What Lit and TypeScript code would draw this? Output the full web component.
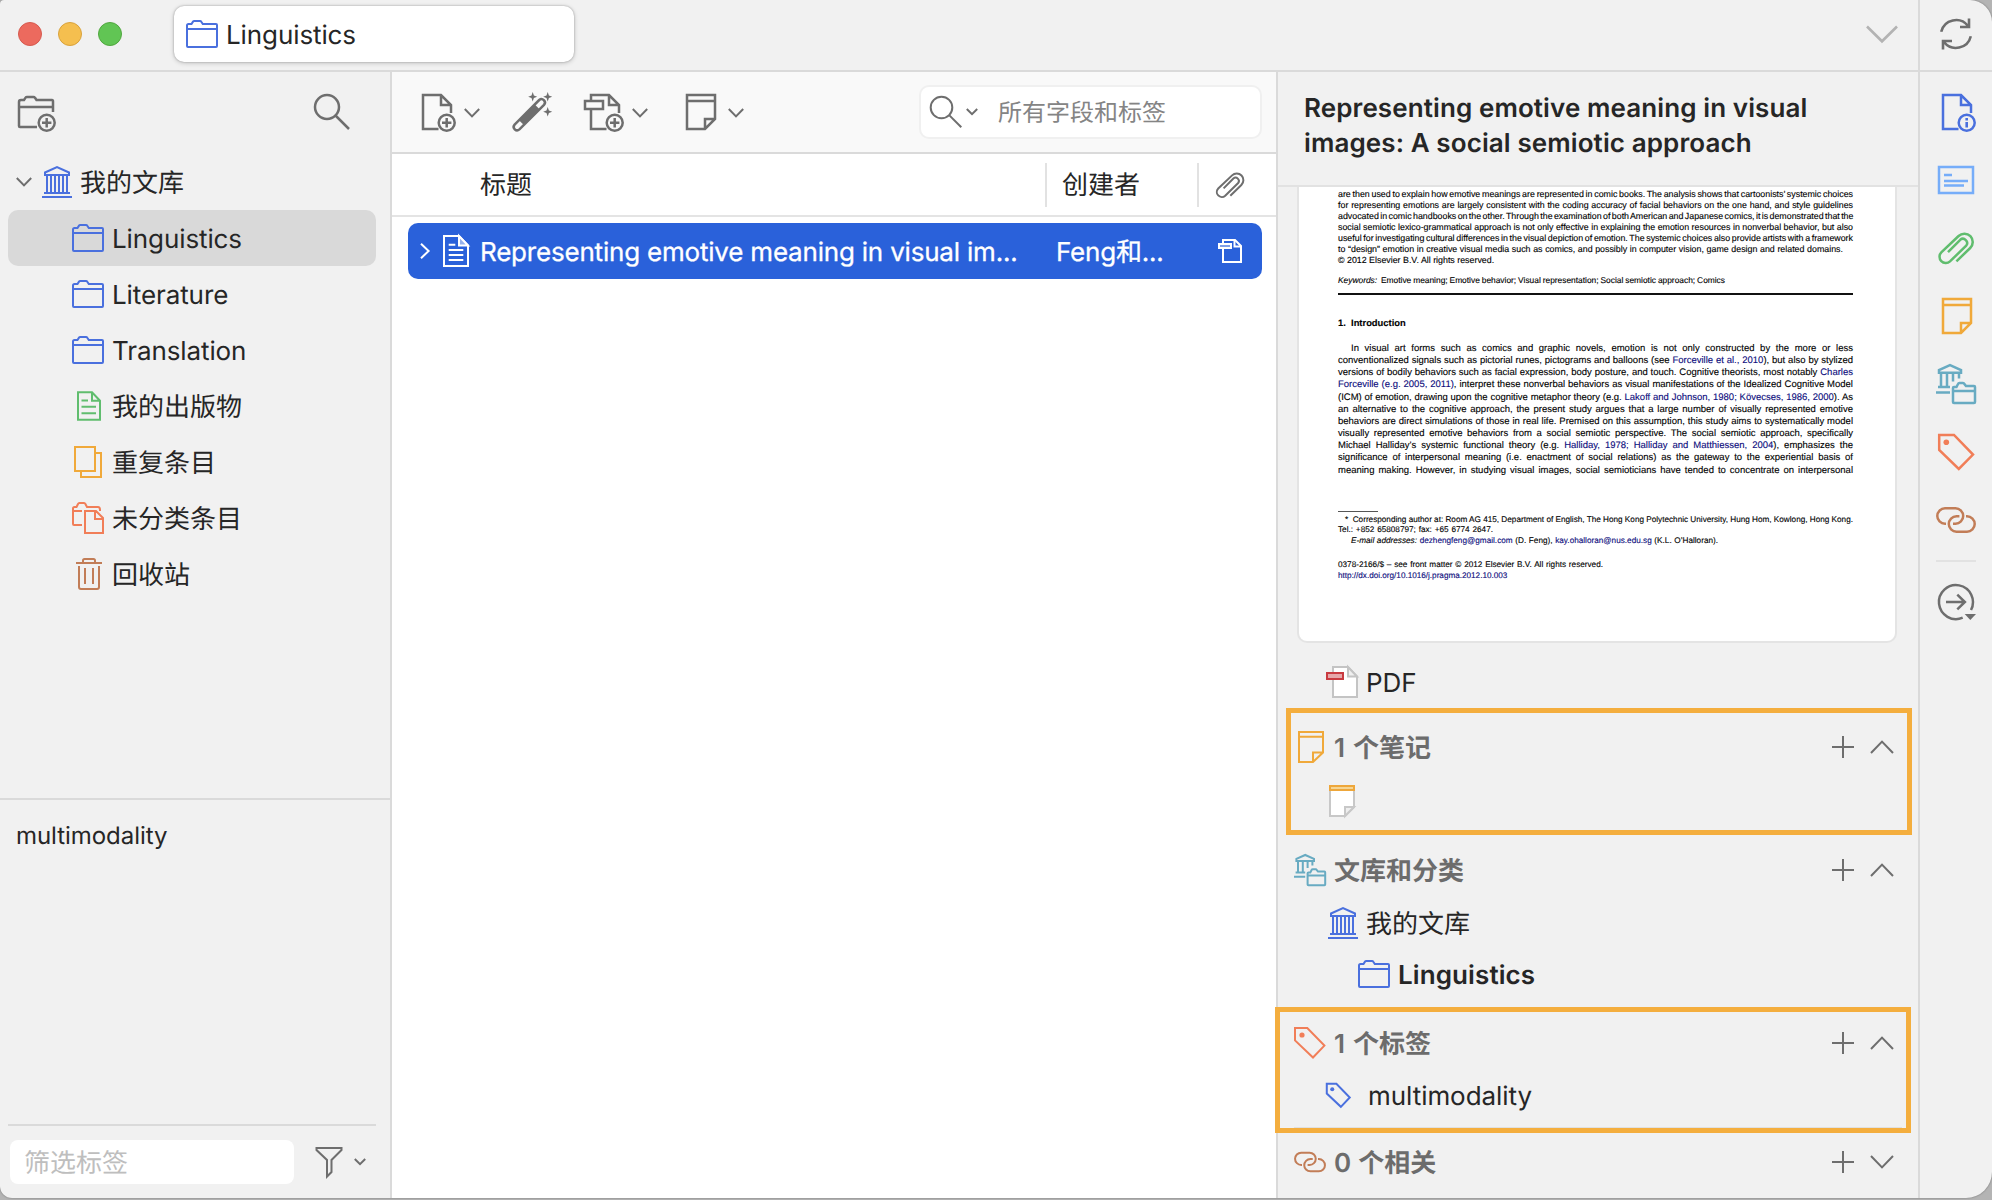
import { LitElement, html, svg, css, nothing } from "lit";
import { customElement, property } from "lit/decorators.js";

const icons: Record<string, { box: string; art: unknown }> = {
  folder: {
    box: "0 0 32 32",
    art: svg`<path d="M5.5 6L7 3.6Q7.4 3 8.2 3H14Q14.9 3 15.3 3.7L16.8 6H30Q31 6 31 7V28Q31 29 30 29H2Q1 29 1 28V7.5Q1 6 2.5 6ZM1 11H31"/>`,
  },
  library: {
    box: "0 0 32 32",
    art: svg`<path d="M5 9V6.5L17 1.2L29 6.5V9ZM7 9V27M11 9V27M15 9V27M19 9V27M23 9V27M27 9V27M4 27H30M2 31H32"/>`,
  },
  publications: {
    box: "0 0 32 32",
    art: svg`<path d="M6 2.3H20L28 10.7V29.7H6ZM20 2.3V10.7H28M9.5 10.6H16M9.5 16.7H24M9.5 23.3H24"/>`,
  },
  duplicates: {
    box: "0 0 32 32",
    art: svg`<path d="M3 1H23V25H3ZM24 7H29V31H9V26"/>`,
  },
  unfiled: {
    box: "0 0 32 32",
    art: svg`<path d="M10 23H2Q1 23 1 22V6.5Q1 5 2.5 5H4.5L6 2Q6.4 1 7.4 1H12Q13 1 13.4 2L15 5H26Q28 5 28 8V9M1 9H10M13 9H24L31 16V31H13ZM23 9V17H31"/>`,
  },
  trash: {
    box: "0 0 32 32",
    art: svg`<path d="M4 5H30M11 5V2.5Q11 1 12.5 1H21.5Q23 1 23 2.5V5M7 8V29Q7 31 9 31H25Q27 31 27 29V8M13 10V26M21 10V26"/>`,
  },
  newCollection: {
    box: "0 0 40 40",
    art: svg`<path d="M21 35H4Q3 35 3 34V10Q3 8 5 8H8L9.6 5.6Q10 5 11 5H17.5Q18.5 5 19 5.8L20.5 8H36Q37 8 37 9.5V20M3 15H37"/><circle cx="30.7" cy="30.7" r="8"/><path d="M30.7 26V35.4M26 30.7H35.4"/>`,
  },
  search: {
    box: "0 0 40 40",
    art: svg`<circle cx="15" cy="15" r="12"/><path d="M23.5 23.5L37 37"/>`,
  },
  newItem: {
    box: "0 0 40 40",
    art: svg`<path d="M22.5 37H7V3H25L35 13V21M25 3V13H35"/><circle cx="30.7" cy="30.7" r="8"/><path d="M30.7 26V35.4M26 30.7H35.4"/>`,
  },
  info: {
    box: "0 0 40 40",
    art: svg`<path d="M22.5 37H7V3H25L35 13V21M25 3V13H35"/><circle cx="30.7" cy="30.7" r="8"/><path d="M30.7 30V35.6M30.7 26V28.4" class="thick"/>`,
  },
  wand: {
    box: "0 0 40 40",
    art: svg`<path d="M2.6 32.6L27.2 8A3.4 3.4 0 0 1 32 12.8L7.4 37.4A3.4 3.4 0 0 1 2.6 32.6Z"/><path class="solid" d="M7 28.2L22.8 12.4L27.6 17.2L11.8 33Z"/><path class="solid" d="M20.7 0L21.9 3.5L25.2 4.7L21.9 5.9L20.7 9.4L19.5 5.9L16.2 4.7L19.5 3.5ZM35.7 0L36.9 3.5L40.2 4.7L36.9 5.9L35.7 9.4L34.5 5.9L31.2 4.7L34.5 3.5ZM35.7 15L36.9 18.5L40.2 19.7L36.9 20.9L35.7 24.4L34.5 20.9L31.2 19.7L34.5 18.5Z"/>`,
  },
  attach: {
    box: "0 0 40 40",
    art: svg`<path d="M7 9V3H25L35 13V21M25 3V13H35M7 17V37H22.5M1 9H19V17H1Z"/><circle cx="30.7" cy="30.7" r="8"/><path d="M30.7 26V35.4M26 30.7H35.4"/>`,
  },
  note: {
    box: "0 0 40 40",
    art: svg`<path d="M7 3H35V27L25 37H7ZM7 9H35M35 27H25V37"/>`,
  },
  noteSmall: {
    box: "0 0 32 32",
    art: svg`<path d="M5 1H29V21.5L19 31H5ZM5 5.8H29M29 21.5H19V31"/>`,
  },
  noteColor: {
    box: "0 0 32 32",
    art: svg`<path d="M4 1H28V22L19 31H4Z" fill="#fff" stroke="#c8c8c8"/><path d="M28 22H19V31Z" fill="#efefef" stroke="#c8c8c8"/><path d="M4 1H28V5H4Z" fill="#f6d694" stroke="#eea73b"/>`,
  },
  pdfColor: {
    box: "0 0 32 32",
    art: svg`<path d="M7 1H22L31 10.5V31H7Z" fill="#fff" stroke="#c4c4c4"/><path d="M22 1V10.5H31Z" fill="#efefef" stroke="#c4c4c4"/><path d="M1 7H17V13H1Z" fill="#e6a7aa" stroke="#c93a40"/>`,
  },
  abstract: {
    box: "0 0 40 40",
    art: svg`<path d="M3 7H37V33H3ZM8 15H16M8 21H32M8 25.4H28"/>`,
  },
  clip: {
    box: "0 0 40 40",
    art: svg`<path d="M20.4 33.4L34.2 20A8.1 8.1 0 0 0 22.6 8L5.3 24.3A6.3 6.3 0 0 0 14 33.4L30.2 17.6A4.2 4.2 0 0 0 24.2 11.8L12 24.2"/>`,
  },
  libCollections: {
    box: "0 0 40 40",
    art: svg`<path d="M3 8.8V6L14 1.2L25 6V8.8ZM5 9V23M11 9V23M17 9V17.5M23 9V14.5M2 23H14M0 28.5H14M20.5 23L22 20Q22.4 19 23.4 19H27Q28 19 28.4 20L30 22H38Q39 22 39 23V38Q39 39 38 39H18Q17 39 17 38V24Q17 23 18 23ZM17 27H39"/>`,
  },
  tag: {
    box: "0 0 40 40",
    art: svg`<path d="M3.2 3H18L37 22.6L22.8 37L3.2 18Z"/><circle class="solid" cx="10.3" cy="10.3" r="2.8"/>`,
  },
  tagSmall: {
    box: "0 0 32 32",
    art: svg`<path d="M1 1H13.3L30.4 18.6L19 30.5L1 13.4Z"/><circle class="solid" cx="8" cy="8" r="2.6"/>`,
  },
  related: {
    box: "0 0 40 40",
    art: svg`<path d="M10 23.7H9A7.7 7.7 0 0 1 9 8.3H19.5A7.7 7.7 0 0 1 19.5 23.7H17M23.4 16.3H20.5A7.7 7.7 0 0 0 20.5 31.7H31A7.7 7.7 0 0 0 31 16.3H30"/>`,
  },
  locate: {
    box: "0 0 40 40",
    art: svg`<path d="M35 28A17 17 0 1 0 26.7 35.7M10 20H29M21.3 12.7L28.9 20L21.3 27.3"/><path class="solid" d="M28.7 32H40L34.3 38Z"/>`,
  },
  sync: {
    box: "0 0 32 32",
    art: svg`<path class="thick" d="M1.2 13.8A15.2 15.2 0 0 1 28 8M29 0.5V9H20M30.8 18.2A15.2 15.2 0 0 1 4 24M3 31.5V23H12"/>`,
  },
  article: {
    box: "0 0 26 32",
    art: svg`<path d="M1 1H16L25 10.5V31H1Z"/><path d="M16 1V10.5H25Z" fill="#94b0ec"/><path d="M5.7 9.8H12.3M5.7 15H20.3M5.7 20H20.3M5.7 25H20.3"/>`,
  },
  pdfWhite: {
    box: "0 0 24 24",
    art: svg`<path d="M5 4V1H17L23 7V23H5V10"/><path d="M16.5 1V7.5H23" /><path d="M1 5H13V9H1Z" fill="#7f9fe8"/>`,
  },
  funnel: {
    box: "0 0 28 32",
    art: svg`<path d="M1.5 1H26.5V3L16.5 13V25L12 29.5V13L1.5 3Z"/>`,
  },
  plus: { box: "0 0 22 22", art: svg`<path d="M0 11H22M11 0V22"/>` },
  down: { box: "0 0 16 10", art: svg`<path d="M.8 1L8 8.4L15.2 1"/>` },
  downSmall: { box: "0 0 12 8", art: svg`<path d="M.8 1L6 6.2L11.2 1"/>` },
  downWide: { box: "0 0 24 14", art: svg`<path d="M1 1L12 12.4L23 1"/>` },
  upWide: { box: "0 0 24 14", art: svg`<path d="M1 13L12 1.6L23 13"/>` },
  downTabs: { box: "0 0 32 18", art: svg`<path class="thick" d="M1 1.5L16 16.3L31 1.5"/>` },
  right: { box: "0 0 10 16", art: svg`<path d="M1 .8L8.6 8L1 15.2"/>` },
};

@customElement("z-icon")
export class ZIcon extends LitElement {
  @property() name = "folder";

  static styles = css`
    :host {
      display: block;
      flex: none;
      width: 32px;
      height: 32px;
    }
    svg {
      display: block;
      width: 100%;
      height: 100%;
      overflow: visible;
      fill: none;
      stroke: currentColor;
      stroke-width: 2px;
    }
    :host(.i40) svg {
      stroke-width: 2.5px;
    }
    :host(.fine) svg {
      stroke-width: 2px;
    }
    svg * {
      vector-effect: non-scaling-stroke;
    }
    .thick {
      stroke-width: 2.6px;
    }
    .solid {
      fill: currentColor;
      stroke: none;
    }
  `;

  render() {
    const icon = icons[this.name];
    return html`<svg viewBox=${icon.box} aria-hidden="true">${icon.art}</svg>`;
  }
}

const collections = [
  { icon: "folder", tone: "blue", label: "Linguistics", cls: "lat", selected: true },
  { icon: "folder", tone: "blue", label: "Literature", cls: "lat" },
  { icon: "folder", tone: "blue", label: "Translation", cls: "lat" },
  { icon: "publications", tone: "green", label: "我的出版物", cls: "" },
  { icon: "duplicates", tone: "yellow", label: "重复条目", cls: "" },
  { icon: "unfiled", tone: "orange", label: "未分类条目", cls: "" },
  { icon: "trash", tone: "wood", label: "回收站", cls: "" },
];

const railItems = [
  ["info", "blue"],
  ["abstract", "azure"],
  ["clip", "green"],
  ["note", "yellow"],
  ["libCollections", "teal"],
  ["tag", "orange"],
  ["related", "wood"],
];

const abstractLines = [
  "are then used to explain how emotive meanings are represented in comic books. The analysis shows that cartoonists’ systemic choices",
  "for representing emotions are largely consistent with the coding accuracy of facial behaviors on the one hand, and style guidelines",
  "advocated in comic handbooks on the other. Through the examination of both American and Japanese comics, it is demonstrated that the",
  "social semiotic lexico-grammatical approach is not only effective in explaining the emotion resources in nonverbal behavior, but also",
  "useful for investigating cultural differences in the visual depiction of emotion. The systemic choices also provide artists with a framework",
];

const introLines = [
  html`In visual art forms such as comics and graphic novels, emotion is not only constructed by the more or less`,
  html`conventionalized signals such as pictorial runes, pictograms and balloons (see <a>Forceville et al., 2010</a>), but also by stylized`,
  html`versions of bodily behaviors such as facial expression, body posture, and touch. Cognitive theorists, most notably <a>Charles</a>`,
  html`<a>Forceville (e.g. 2005, 2011)</a>, interpret these nonverbal behaviors as visual manifestations of the Idealized Cognitive Model`,
  html`(ICM) of emotion, drawing upon the cognitive metaphor theory (e.g. <a>Lakoff and Johnson, 1980; Kövecses, 1986, 2000</a>). As`,
  html`an alternative to the cognitive approach, the present study argues that a large number of visually represented emotive`,
  html`behaviors are direct simulations of those in real life. Premised on this assumption, this study aims to systematically model`,
  html`visually represented emotive behaviors from a social semiotic perspective. The social semiotic approach, specifically`,
  html`Michael Halliday’s systemic functional theory (e.g. <a>Halliday, 1978; Halliday and Matthiessen, 2004</a>), emphasizes the`,
  html`significance of interpersonal meaning (i.e. enactment of social relations) as the gateway to the experiential basis of`,
  html`meaning making. However, in studying visual images, social semioticians have tended to concentrate on interpersonal`,
];

@customElement("pdf-preview")
export class PdfPreview extends LitElement {
  static styles = css`
    :host {
      display: flex;
      flex-direction: column;
      box-sizing: border-box;
      height: 456px;
      padding: 2px 42px 0 39px;
      border: 2px solid #e4e4e4;
      border-top: 0;
      border-radius: 0 0 10px 10px;
      background: #fff;
      color: #000;
      font-family: "Liberation Sans", Arial, sans-serif;
      overflow: hidden;
      -webkit-text-stroke: 0.12px;
    }
    .abstract,
    .intro,
    .foot {
      white-space: nowrap;
      word-spacing: -0.12em;
    }
    .fill {
      text-align: justify;
      text-align-last: justify;
    }
    .abstract {
      font-size: 8.85px;
      line-height: 11px;
    }
    .natural {
      word-spacing: 0;
    }
    .domains {
      width: 505px;
    }
    .keywords {
      margin-top: 9px;
      font-size: 8.4px;
      line-height: 11px;
      width: 387px;
    }
    .rule {
      height: 2px;
      margin-top: 7px;
      background: #111;
    }
    h2 {
      margin: 22px 0 0;
      font-size: 9.4px;
      line-height: 12px;
    }
    .intro {
      margin-top: 14px;
      font-size: 9.5px;
      line-height: 12.15px;
    }
    .first {
      padding-left: 13px;
    }
    a {
      color: #0c0c7c;
    }
    .note-rule {
      width: 40px;
      height: 1px;
      margin-top: 34px;
      background: #555;
    }
    .foot.notes {
      margin-top: 3px;
      font-size: 8.2px;
      line-height: 10.4px;
    }
    .star {
      padding-left: 7px;
    }
    .mail {
      width: 367px;
      padding-left: 13px;
    }
    .tel {
      width: 155px;
    }
    .issn {
      width: 265px;
      margin-top: 13px;
      line-height: 11px;
    }
    .doi {
      line-height: 11px;
      letter-spacing: -0.02px;
    }
  `;

  render() {
    return html`
      <div class="abstract">
        ${abstractLines.map((l) => html`<div class="fill">${l}</div>`)}
        <div class="fill domains">to “design” emotion in creative visual media such as comics, and possibly in computer vision, game design and related domains.</div>
        <div class="natural">© 2012 Elsevier B.V. All rights reserved.</div>
      </div>
      <div class="foot fill keywords"><i>Keywords:</i>&nbsp; Emotive meaning; Emotive behavior; Visual representation; Social semiotic approach; Comics</div>
      <div class="rule"></div>
      <h2>1.&nbsp; Introduction</h2>
      <div class="intro">
        ${introLines.map((l, i) => html`<div class="fill ${i ? "" : "first"}">${l}</div>`)}
      </div>
      <div class="note-rule"></div>
      <div class="foot notes">
        <div class="fill star">*&nbsp; Corresponding author at: Room AG 415, Department of English, The Hong Kong Polytechnic University, Hung Hom, Kowlong, Hong Kong.</div>
        <div class="fill tel">Tel.: +852 65808797; fax: +65 6774 2647.</div>
        <div class="fill mail"><i>E-mail addresses:</i> <a>dezhengfeng@gmail.com</a> (D. Feng), <a>kay.ohalloran@nus.edu.sg</a> (K.L. O’Halloran).</div>
        <div class="fill issn">0378-2166/$ – see front matter © 2012 Elsevier B.V. All rights reserved.</div>
        <div class="doi"><a>http://dx.doi.org/10.1016/j.pragma.2012.10.003</a></div>
      </div>
    `;
  }
}

@customElement("app-root")
export class AppRoot extends LitElement {
  static styles = css`
    :host {
      display: block;
      position: relative;
      width: 1992px;
      height: 1200px;
      overflow: hidden;
      background: #b4b4b4;
      color: #262626;
      font-family: Inter, "Noto Sans CJK SC", sans-serif;
      font-size: 26px;
      line-height: 36px;
      text-rendering: geometricPrecision;
    }
    .window {
      display: grid;
      grid-template-columns: 1918px 74px;
      height: 1198px;
      box-sizing: border-box;
      border-radius: 4px 22px 26px 12px;
      background: #f1f1f1;
      overflow: hidden;
      box-shadow: 0 0 2px #6b6b6b;
    }
    .main {
      display: flex;
      flex-direction: column;
      min-width: 0;
    }
    .titlebar {
      display: flex;
      align-items: center;
      box-sizing: border-box;
      height: 72px;
      padding: 0 20px 2px 18px;
      border-bottom: 2px solid #dadada;
    }
    .lights {
      display: flex;
      gap: 16px;
      margin-right: 52px;
    }
    .light {
      box-sizing: border-box;
      width: 24px;
      height: 24px;
      border-radius: 50%;
      border: 1px solid #d65a4f;
      background: #ec6a5e;
    }
    .light.min {
      background: #f5bf4f;
      border-color: #d9a23c;
    }
    .light.max {
      background: #61c554;
      border-color: #51a73f;
    }
    .tab {
      display: flex;
      align-items: center;
      gap: 8px;
      box-sizing: border-box;
      width: 400px;
      height: 56px;
      padding-left: 12px;
      border-radius: 10px;
      background: #fff;
      box-shadow: 0 0 2px rgba(0, 0, 0, 0.3), 0 1px 5px rgba(0, 0, 0, 0.2);
    }
    .tab span,
    .node span,
    .row span,
    .head span,
    .entry span {
      padding-top: 3px;
    }
    .tabs-menu {
      width: 32px;
      height: 18px;
      margin-left: auto;
      color: #b3b3b3;
    }
    .panes {
      display: grid;
      grid-template-columns: 392px 886px 640px;
      flex: 1;
      min-height: 0;
    }
    .blue { color: #4a70de; }
    .azure { color: #76adf9; }
    .green { color: #60bd6e; }
    .yellow { color: #f0a93a; }
    .teal { color: #68abc2; }
    .orange { color: #f17e58; }
    .wood { color: #c27d57; }
    .grey { color: #6e6e6e; }
    .i40 { width: 40px; height: 40px; }
    .chev { width: 16px; height: 10px; }
    .chev-s { width: 12px; height: 8px; }
    .chev-w { width: 24px; height: 14px; }
    .plus { width: 22px; height: 22px; }
    .lat { letter-spacing: -0.1px; }

    /* collections pane */
    .sidebar {
      display: flex;
      flex-direction: column;
      box-sizing: border-box;
      border-right: 2px solid #dadada;
    }
    .side-tools {
      display: flex;
      justify-content: space-between;
      height: 82px;
      box-sizing: border-box;
      padding: 20px 38px 0 16px;
    }
    .tree {
      display: flex;
      flex-direction: column;
      height: 644px;
      padding: 0 14px 0 8px;
    }
    .node {
      display: flex;
      align-items: center;
      gap: 8px;
      flex: none;
      height: 56px;
      box-sizing: border-box;
      padding-left: 64px;
      border-radius: 10px;
    }
    .node.root {
      padding-left: 8px;
    }
    .node.selected {
      background: #d9d9d9;
    }
    .tags {
      display: flex;
      flex-direction: column;
      flex: 1;
      border-top: 2px solid #dadada;
    }
    .tag-name {
      flex: 1;
      padding: 18px 16px 0;
      font-size: 24px;
      letter-spacing: -0.05px;
    }
    .tag-filter {
      display: flex;
      align-items: center;
      height: 74px;
      box-sizing: border-box;
      margin: 0 14px 0 8px;
      padding: 14px 10px 14px 2px;
      border-top: 2px solid #dadada;
    }
    .field {
      flex: none;
      width: 284px;
      height: 44px;
      box-sizing: border-box;
      padding: 6px 14px 2px;
      border-radius: 8px;
      background: #fff;
      color: #bebebe;
    }
    .funnel {
      width: 28px;
      height: 32px;
      margin: 2px 11px 0 21px;
    }

    /* items pane */
    .items {
      display: flex;
      flex-direction: column;
      box-sizing: border-box;
      border-right: 2px solid #dadada;
      background: #fff;
    }
    .toolbar {
      display: flex;
      align-items: center;
      box-sizing: border-box;
      height: 82px;
      padding: 0 14px 0 24px;
      background: #f9f9f9;
      border-bottom: 2px solid #dadada;
    }
    .tool {
      display: flex;
      align-items: center;
      gap: 8px;
      margin-right: 32px;
    }
    .tool .chev {
      margin-top: 1px;
    }
    .quick {
      display: flex;
      align-items: center;
      box-sizing: border-box;
      width: 343px;
      height: 54px;
      margin-left: auto;
      padding-left: 7px;
      border: 2px solid #f0f0f0;
      border-radius: 10px;
      background: #fff;
      color: #848484;
      font-size: 24px;
    }
    .quick .i40 {
      width: 36px;
      height: 36px;
    }
    .quick .chev-s {
      margin-left: 2px;
    }
    .quick .hint {
      margin-left: 20px;
      padding-top: 2px;
    }
    .columns {
      display: flex;
      align-items: center;
      height: 61px;
      border-bottom: 2px solid #e4e4e4;
    }
    .col-title {
      width: 565px;
      padding: 3px 0 0 88px;
    }
    .col-creator,
    .col-clip {
      display: flex;
      align-items: center;
      height: 44px;
      border-left: 2px solid #e2e2e2;
    }
    .col-creator {
      box-sizing: border-box;
      width: 152px;
      padding: 3px 0 0 15px;
    }
    .col-clip {
      padding-left: 15px;
    }
    .col-clip .clip {
      width: 32px;
      height: 32px;
      margin-top: 1px;
    }
    .row {
      display: flex;
      align-items: center;
      height: 56px;
      margin: 6px 14px 0 16px;
      box-sizing: border-box;
      padding-left: 12px;
      border-radius: 10px;
      background: #2a61da;
      color: #fff;
      letter-spacing: -0.2px;
      -webkit-text-stroke: 0.3px #fff;
    }
    .row .chev-r {
      width: 10px;
      height: 16px;
    }
    .row .article {
      width: 26px;
      margin: 0 11px 0 13px;
    }
    .row .name {
      width: 576px;
    }
    .row .who {
      width: 162px;
    }
    .row .pdf {
      width: 24px;
      height: 24px;
    }

    /* item pane */
    .details {
      display: flex;
      flex-direction: column;
      min-width: 0;
    }
    h1 {
      height: 115px;
      box-sizing: border-box;
      margin: 0;
      padding: 19px 26px 0;
      border-bottom: 2px solid #e2e2e2;
      font-size: 26px;
      font-weight: 600;
      line-height: 35px;
      letter-spacing: 0.1px;
      white-space: nowrap;
    }
    pdf-preview {
      flex: none;
      margin: 0 21px 0 19px;
    }
    .entry,
    .head {
      display: flex;
      align-items: center;
      gap: 8px;
      flex: none;
      height: 40px;
      padding: 0 24px 0 48px;
    }
    .head {
      margin-top: 29px;
      padding-left: 16px;
      color: #6c6c6c;
      font-weight: 600;
      word-spacing: 1.5px;
    }
    .head .plus {
      margin-left: auto;
      margin-right: 8px;
    }
    .entry { margin-top: 13px; }
    .entry.attachment { margin-top: 19px; }
    .head.notes { margin-top: 25px; }
    .head.notes + .entry { margin-top: 14px; }
    .entry.child {
      margin-top: 11px;
      padding-left: 80px;
      font-weight: 600;
      letter-spacing: 0.1px;
    }
    .entry.tagged {
      margin-top: 12px;
      letter-spacing: -0.05px;
    }
    .tagged z-icon {
      width: 25px;
      height: 25px;
      margin: 0 9px 0 0;
    }
    .sep {
      flex: none;
      height: 2px;
      margin: 12px 16px 0;
      background: #e0e0e0;
    }
    .sep + .head {
      margin-top: 15px;
    }
    .sep + .head.rel {
      margin-top: 13px;
      word-spacing: 0.5px;
    }

    /* side navigation */
    .rail {
      display: flex;
      flex-direction: column;
      box-sizing: border-box;
      border-left: 2px solid #dadada;
    }
    .sync {
      display: flex;
      justify-content: center;
      box-sizing: border-box;
      height: 72px;
      padding-top: 18px;
      border-bottom: 2px solid #dadada;
    }
    .rail-list {
      display: flex;
      flex-direction: column;
      align-items: center;
      gap: 28px;
      padding: 20px 0;
    }
    .divider {
      width: 40px;
      height: 2px;
      margin: 0 auto 20px;
      background: #e2e2e2;
    }
    .rail .last {
      margin: 0 auto;
    }

    /* callout frames drawn over the item pane */
    .callout {
      position: absolute;
      box-sizing: border-box;
      border: 5px solid #f4ae3e;
    }
    .callout.a {
      left: 1286px;
      top: 708px;
      width: 626px;
      height: 127px;
    }
    .callout.b {
      left: 1275px;
      top: 1007px;
      width: 636px;
      height: 126px;
    }
  `;

  private head(icon: string, tone: string, label: string, cls = "", open = true) {
    return html`<div class="head ${cls}">
      <z-icon class=${tone} name=${icon}></z-icon><span>${label}</span>
      <z-icon class="plus grey" name="plus"></z-icon>
      <z-icon class="chev-w grey" name=${open ? "upWide" : "downWide"}></z-icon>
    </div>`;
  }

  render() {
    return html`
      <div class="window">
        <div class="main">
          <div class="titlebar">
            <div class="lights">
              <span class="light"></span><span class="light min"></span><span class="light max"></span>
            </div>
            <div class="tab">
              <z-icon class="blue" name="folder"></z-icon><span class="lat">Linguistics</span>
            </div>
            <z-icon class="tabs-menu" name="downTabs"></z-icon>
          </div>
          <div class="panes">
            <div class="sidebar">
              <div class="side-tools">
                <z-icon class="i40 grey" name="newCollection"></z-icon>
                <z-icon class="i40 grey" name="search"></z-icon>
              </div>
              <div class="tree">
                <div class="node root">
                  <z-icon class="chev grey" name="down"></z-icon>
                  <z-icon class="blue" name="library"></z-icon><span>我的文库</span>
                </div>
                ${collections.map(
                  (c) => html`<div class="node ${c.selected ? "selected" : ""}">
                    <z-icon class=${c.tone} name=${c.icon}></z-icon><span class=${c.cls || nothing}>${c.label}</span>
                  </div>`,
                )}
              </div>
              <div class="tags">
                <div class="tag-name">multimodality</div>
                <div class="tag-filter">
                  <div class="field">筛选标签</div>
                  <z-icon class="funnel grey" name="funnel"></z-icon>
                  <z-icon class="chev-s grey" name="downSmall"></z-icon>
                </div>
              </div>
            </div>
            <div class="items">
              <div class="toolbar">
                <div class="tool">
                  <z-icon class="i40 grey" name="newItem"></z-icon><z-icon class="chev grey" name="down"></z-icon>
                </div>
                <div class="tool"><z-icon class="i40 grey" name="wand"></z-icon></div>
                <div class="tool">
                  <z-icon class="i40 grey" name="attach"></z-icon><z-icon class="chev grey" name="down"></z-icon>
                </div>
                <div class="tool">
                  <z-icon class="i40 grey" name="note"></z-icon><z-icon class="chev grey" name="down"></z-icon>
                </div>
                <div class="quick">
                  <z-icon class="i40 fine grey" name="search"></z-icon>
                  <z-icon class="chev-s grey" name="downSmall"></z-icon>
                  <span class="hint">所有字段和标签</span>
                </div>
              </div>
              <div class="columns">
                <div class="col-title">标题</div>
                <div class="col-creator">创建者</div>
                <div class="col-clip"><z-icon class="clip grey" name="clip"></z-icon></div>
              </div>
              <div class="row">
                <z-icon class="chev-r" name="right"></z-icon>
                <z-icon class="article" name="article"></z-icon>
                <span class="name">Representing emotive meaning in visual im...</span>
                <span class="who">Feng和...</span>
                <z-icon class="pdf" name="pdfWhite"></z-icon>
              </div>
            </div>
            <div class="details">
              <h1>Representing emotive meaning in visual<br />images: A social semiotic approach</h1>
              <pdf-preview></pdf-preview>
              <div class="entry attachment"><z-icon name="pdfColor"></z-icon><span>PDF</span></div>
              ${this.head("noteSmall", "yellow", "1 个笔记", "notes")}
              <div class="entry"><z-icon name="noteColor"></z-icon></div>
              <div class="sep"></div>
              ${this.head("libCollections", "teal", "文库和分类")}
              <div class="entry"><z-icon class="blue" name="library"></z-icon><span>我的文库</span></div>
              <div class="entry child"><z-icon class="blue" name="folder"></z-icon><span>Linguistics</span></div>
              ${this.head("tagSmall", "orange", "1 个标签")}
              <div class="entry tagged"><z-icon class="blue" name="tagSmall"></z-icon><span>multimodality</span></div>
              <div class="sep"></div>
              ${this.head("related", "wood", "0 个相关", "rel", false)}
            </div>
          </div>
        </div>
        <div class="rail">
          <div class="sync"><z-icon class="grey" name="sync"></z-icon></div>
          <div class="rail-list">
            ${railItems.map(([name, tone]) => html`<z-icon class="i40 ${tone}" name=${name}></z-icon>`)}
          </div>
          <div class="divider"></div>
          <z-icon class="i40 grey last" name="locate"></z-icon>
        </div>
      </div>
      <div class="callout a"></div>
      <div class="callout b"></div>
    `;
  }
}
